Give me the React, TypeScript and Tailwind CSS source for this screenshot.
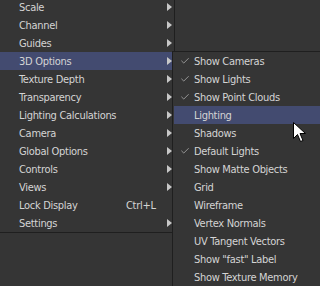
import { Check } from "lucide-react";

type Item = { label: string; sub?: boolean; shortcut?: string; active?: boolean; checked?: boolean };

const mainItems: Item[] = [
  { label: "Scale", sub: true },
  { label: "Channel", sub: true },
  { label: "Guides", sub: true },
  { label: "3D Options", sub: true, active: true },
  { label: "Texture Depth", sub: true },
  { label: "Transparency", sub: true },
  { label: "Lighting Calculations", sub: true },
  { label: "Camera", sub: true },
  { label: "Global Options", sub: true },
  { label: "Controls", sub: true },
  { label: "Views", sub: true },
  { label: "Lock Display", shortcut: "Ctrl+L" },
  { label: "Settings", sub: true },
];

const subItems: Item[] = [
  { label: "Show Cameras", checked: true },
  { label: "Show Lights", checked: true },
  { label: "Show Point Clouds", checked: true },
  { label: "Lighting", active: true },
  { label: "Shadows" },
  { label: "Default Lights", checked: true },
  { label: "Show Matte Objects" },
  { label: "Grid" },
  { label: "Wireframe" },
  { label: "Vertex Normals" },
  { label: "UV Tangent Vectors" },
  { label: 'Show "fast" Label' },
  { label: "Show Texture Memory" },
];

function Arrow() {
  return (
    <svg width="5" height="8" viewBox="0 0 5 8" className="absolute left-[167px] top-[5px]">
      <path d="M0 0 L5 4 L0 8 Z" fill="#c8c8c8" />
    </svg>
  );
}

function Cursor() {
  return (
    <svg width="13" height="21" viewBox="0 0 13 21" className="absolute left-[293px] top-[122px]">
      <path
        d="M0.5 0.5 L0.5 16.5 L4.5 12.5 L7.5 19.5 L10 18.5 L7 11.5 L12.5 11.5 Z"
        fill="#ffffff"
        stroke="#000000"
        strokeWidth="1"
      />
    </svg>
  );
}

export default function App() {
  return (
    <div
      className="relative w-[320px] h-[286px] overflow-hidden bg-[#353535] text-[11px] tracking-[-0.3px] text-[#d4d4d4]"
      style={{ fontFamily: '"DejaVu Sans Condensed", "DejaVu Sans", sans-serif' }}
    >
      <div className="-mt-[2px] w-[175px] border-r border-b border-[#1f1f1f] pr-[1px]">
        {mainItems.map((it) => (
          <div
            key={it.label}
            className={`relative h-[18px] pt-[1px] leading-[17px] pl-[19px] whitespace-nowrap ${it.active ? "bg-[#434b70]" : ""}`}
          >
            {it.label}
            {it.shortcut && <span className="absolute left-[126px] top-[1px]">{it.shortcut}</span>}
            {it.sub && <Arrow />}
          </div>
        ))}
      </div>

      <div className="absolute left-[172px] top-[51px] right-0 bottom-0 bg-[#353535] border-l border-t border-[#1f1f1f] pl-[1px]">
        {subItems.map((it) => (
          <div
            key={it.label}
            className={`relative h-[18px] pt-[1px] leading-[17px] pl-[20px] whitespace-nowrap ${it.active ? "bg-[#434b70]" : ""}`}
          >
            {it.checked && (
              <Check size={10} strokeWidth={2} className="absolute left-[6px] top-[4px] text-[#a8a8a8]" />
            )}
            {it.label}
          </div>
        ))}
      </div>

      <Cursor />
    </div>
  );
}
